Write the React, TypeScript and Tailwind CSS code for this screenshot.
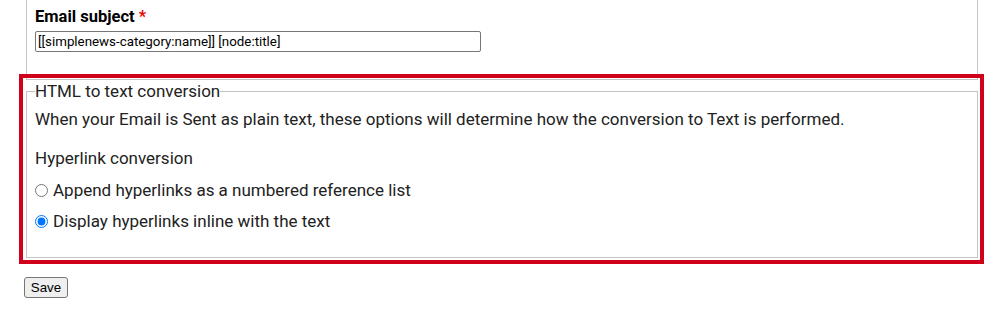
import { useState } from "react"

const Radio = ({ label, checked, onPick }: { label: string; checked: boolean; onPick: () => void }) => {
    return (
        <label className="flex items-center h-[19px]">
            <input
                type="radio"
                name="hyperlinks"
                checked={checked}
                onChange={onPick}
                className="m-0 mr-[5px] w-[13px] h-[13px] accent-[#0075ff]"
            />
            <span>{label}</span>
        </label>
    )
}

const App = () => {
    const [mode, setMode] = useState("inline")

    return (
        <div className="w-full h-[309px] bg-white text-[#222] font-['Roboto',sans-serif] text-[17px] leading-[19px]">

            <div className="ml-[26px] w-[952px] h-[80px] border-x border-b border-[#c4c4c4] pl-[8px] pt-[7px]">
                <div className="font-bold text-black text-[16.5px]">
                    Email subject <span className="text-[#e00]">*</span>
                </div>
                <input
                    type="text"
                    defaultValue="[[simplenews-category:name]] [node:title]"
                    className="mt-[5px] w-[446px] h-[21px] px-[2px] border border-[#767676] rounded-[2px] text-[13.33px] text-black font-['Roboto',sans-serif]"
                />
            </div>

            <div className="relative ml-[26px] w-[952px] mt-[2px]">
                <fieldset className="border border-[#c4c4c4] px-[8px] pt-[9px] pb-[26px]">
                    <legend className="leading-[19px]">HTML to text conversion</legend>
                    <p>When your Email is Sent as plain text, these options will determine how the conversion to Text is performed.</p>
                    <p className="mt-[20px]">Hyperlink conversion</p>
                    <div className="mt-[13px] flex flex-col gap-[12px]">
                        <Radio label="Append hyperlinks as a numbered reference list" checked={mode === "list"} onPick={() => setMode("list")} />
                        <Radio label="Display hyperlinks inline with the text" checked={mode === "inline"} onPick={() => setMode("inline")} />
                    </div>
                </fieldset>
                {/* highlight frame drawn over the section */}
                <div className="absolute -left-[7px] -right-[6px] -top-[8px] -bottom-[6px] border-4 border-[#d0021b] pointer-events-none"></div>
            </div>

            <button className="ml-[24px] mt-[19px] w-[44px] h-[21px] border border-[#767676] rounded-[3px] bg-[#efefef] text-[13.33px] text-black font-['Liberation_Sans',Arial,sans-serif] leading-none">
                Save
            </button>
        </div>
    )
}

export default App
